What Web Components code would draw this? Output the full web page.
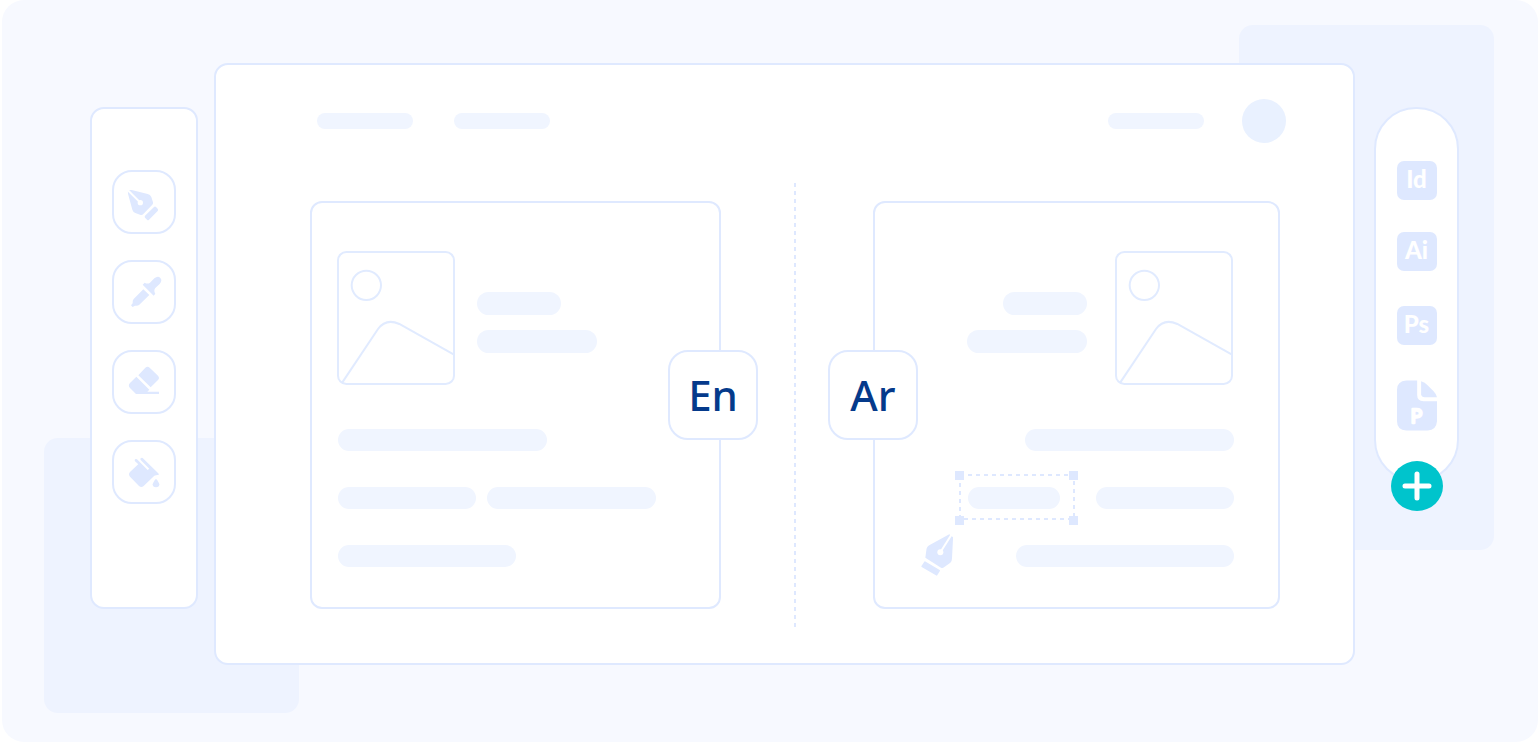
<!DOCTYPE html>
<html lang="en">
<head>
<meta charset="utf-8">
<title>Bilingual design editor</title>
<style>
  :root {
    --stage: #f7f9ff;
    --blob: #eef3ff;
    --line: #dfe9ff;
    --icon: #dee8ff;
    --bar: #f0f5ff;
    --navy: #053a8b;
    --teal: #00c4cc;
  }
  body { margin: 0; background: #fff; font-family: "Noto Sans", "Open Sans", sans-serif; }
</style>
</head>
<body>
<editor-stage>
  <tool-panel></tool-panel>
  <editor-window>
    <doc-page slot="source" lang-code="En"></doc-page>
    <doc-page slot="target" lang-code="Ar" mirrored></doc-page>
  </editor-window>
  <app-dock></app-dock>
</editor-stage>

<script>
const define = (name, html) => {
  const template = document.createElement('template');
  template.innerHTML = html;
  customElements.define(name, class extends HTMLElement {
    constructor() {
      super();
      this.attachShadow({ mode: 'open' }).append(template.content.cloneNode(true));
    }
  });
};

/* Rounded placeholder bar; size comes from --w and --h. */
define('place-bar', `
<style>
  :host { display: block; flex: none; position: relative; width: var(--w, 96px); height: var(--h, 22px);
    border-radius: 12px; background: var(--bar); }
</style><slot></slot>`);

define('photo-frame', `
<style>
  :host { display: block; flex: none; width: 118px; height: 134px; }
  svg { display: block; width: 100%; height: 100%; }
</style>
<svg viewBox="111 183 354 402" fill="none" stroke="#e1ebff" stroke-width="6" aria-hidden="true">
  <rect x="114" y="186" width="348" height="396" rx="25"/>
  <circle cx="199" cy="286" r="44"/>
  <path d="M127 577 L234 417 Q258 384 298 402 L462 494"/>
</svg>`);

define('selection-frame', `
<style>
  :host { display: block; position: absolute; left: -13px; top: -17px; width: 124px; height: 55px; }
  svg { display: block; width: 100%; height: 100%; }
</style>
<svg viewBox="0 0 124 55" aria-hidden="true">
  <rect x="5" y="5" width="114" height="44" fill="none" stroke="#dee8ff" stroke-width="2" stroke-dasharray="4 4"/>
  <path fill="#dee8ff" d="M0 1h9v9H0z M114 1h9v9h-9z M0 46h9v9H0z M114 46h9v9h-9z"/>
</svg>`);

define('lang-badge', `
<style>
  :host { display: flex; align-items: center; justify-content: center; box-sizing: border-box;
    width: 90px; height: 90px; border: 2px solid var(--line); border-radius: 20px; background: #fff;
    color: var(--navy); font-size: 42px; font-weight: 500; line-height: 56px; }
</style><slot></slot>`);

customElements.define('doc-page', class extends HTMLElement {
  connectedCallback() {
    if (this.shadowRoot) return;
    const mirrored = this.hasAttribute('mirrored');
    this.attachShadow({ mode: 'open' }).innerHTML = `
<style>
  :host { display: block; position: relative; box-sizing: border-box; min-width: 0; border: 2px solid var(--line);
    border-radius: 12px; padding: 48px 44px 40px 26px; }
  .row { display: flex; }
  .hero { align-items: center; gap: 22px; margin-bottom: 44px; }
  .hero photo-frame { margin-left: -1px; }
  .titles { display: flex; flex-direction: column; gap: 15px; padding-top: 8px; --h: 23px; }
  .lines { display: flex; flex-direction: column; gap: 36px; }
  .pair { gap: 11px; }
  lang-badge { position: absolute; top: 147px; right: -39px; }
  .cursor { display: none; }
  :host([mirrored]) .row { flex-direction: row-reverse; }
  :host([mirrored]) .hero { gap: 28px; }
  :host([mirrored]) .hero photo-frame { margin: 0 1px 0 0; }
  :host([mirrored]) .titles { align-items: flex-end; }
  :host([mirrored]) .pair { gap: 36px; }
  :host([mirrored]) lang-badge { right: auto; left: -47px; }
  :host([mirrored]) .cursor { display: block; position: absolute; left: 46px; top: 331px; width: 33px; height: 42px; }
</style>
<div class="row hero">
  <photo-frame></photo-frame>
  <div class="titles"><place-bar style="--w:84px"></place-bar><place-bar style="--w:120px"></place-bar></div>
</div>
<div class="lines">
  <div class="row"><place-bar style="--w:209px"></place-bar></div>
  <div class="row pair">
    <place-bar style="--w:138px"></place-bar>
    ${mirrored ? '<place-bar style="--w:92px"><selection-frame></selection-frame></place-bar>' : '<place-bar style="--w:169px"></place-bar>'}
  </div>
  <div class="row"><place-bar style="--w:${mirrored ? 218 : 178}px"></place-bar></div>
</div>
<svg class="cursor" viewBox="62 221 99 126" aria-hidden="true">
  <path fill="#dee8ff" d="M147 222 L88 254 Q78 260 78 270 L75 292 L122 322 Q127 325 131 321 L150 307 Q155 303 155 294 L158 236 Q159 228 156 229 Z"/>
  <path stroke="#fff" stroke-width="6" d="M156 219 L120 276"/>
  <circle cx="120" cy="276" r="9" fill="#fff"/>
  <path fill="#dee8ff" stroke="#dee8ff" stroke-width="4" stroke-linejoin="round" d="M74 305 L117 331 L109 344 L65 318 Z"/>
</svg>
<lang-badge>${this.getAttribute('lang-code')}</lang-badge>`;
  }
});

define('editor-window', `
<style>
  :host { display: block; flex: 1; min-width: 0; box-sizing: border-box; border: 2px solid var(--line);
    border-radius: 14px; background: #fff; padding: 34px 73px 35px 94px; }
  header { display: flex; align-items: center; gap: 41px; margin: 0 -6px 40px 7px; --h: 16px; }
  .end { display: flex; align-items: center; gap: 38px; margin-left: auto; }
  .avatar { width: 44px; height: 44px; border-radius: 50%; background: #e9f1ff; }
  main { display: grid; grid-template-columns: minmax(0, 411fr) 152px minmax(0, 407fr); align-items: start; }
  ::slotted(doc-page) { margin-top: 18px; }
  .divider { justify-self: center; align-self: stretch; width: 2px; min-height: 445px; margin-right: 4px;
    background: repeating-linear-gradient(#dee8ff 0 4px, transparent 4px 8px); }
</style>
<header>
  <place-bar></place-bar><place-bar></place-bar>
  <div class="end"><place-bar></place-bar><div class="avatar"></div></div>
</header>
<main>
  <slot name="source"></slot>
  <div class="divider"></div>
  <slot name="target"></slot>
</main>`);

define('tool-panel', `
<style>
  :host { display: flex; flex-direction: column; align-items: center; gap: 26px; flex: none; box-sizing: border-box;
    width: 108px; margin: 44px 16px 0 0; padding: 61px 0 103px; border: 2px solid var(--line); border-radius: 14px; background: #fff; }
  button { display: block; box-sizing: border-box; width: 64px; height: 64px; padding: 0; border: 2px solid var(--line);
    border-radius: 20px; background: #fff; }
  svg { display: block; width: 60px; height: 60px; fill: var(--icon); }
</style>
<button aria-label="Pen"><svg viewBox="102 231 180 180">
  <path d="M155 285 L203 297 Q211 299 214 306 L219 322 Q220 326 217 329 L190 357 Q186 362 180 359 L166 354 Q159 351 157 344 L144 296 Q142 287 147 285 Z"/>
  <path stroke="#fff" stroke-width="6" d="M143 285 L181 323"/><circle cx="181" cy="323" r="8" fill="#fff"/>
  <path d="M222 336 Q225 333 228 336 L233 341 Q236 345 233 348 L207 374 Q204 377 201 374 L195 368 Q193 365 195 362 Z"/>
</svg></button>
<button aria-label="Eyedropper"><svg viewBox="102 501 180 180">
  <path d="M223 550 Q234 541 241 549 Q248 557 239 567 L226 579 Q220 587 226 596 L221 602 L188 569 L194 563 Q203 568 210 563 Z"/>
  <path d="M190 583 L208 600 L178 629 Q174 633 165 632 L158 636 L153 631 L158 625 Q157 616 161 612 Z"/>
</svg></button>
<button aria-label="Eraser"><svg viewBox="102 51 180 180">
  <path d="M175 121 L196 98 Q203 92 209 98 L234 122 Q240 129 234 135 L212 157 Z"/>
  <path d="M169 125 L208 164 L202 170 H237 V177 H168 L150 159 Q143 152 150 144 Z"/>
</svg></button>
<button aria-label="Paint bucket"><svg viewBox="102 321 180 180">
  <path d="M173 389 L150 411 Q144 418 150 425 L177 453 Q184 459 191 453 L223 422 Q230 419 236 420 Q237 416 234 414 L188 369 Q185 367 182 370 Q180 372 182 375 L208 401 L203 405 L171 373 Q168 371 165 373 Q163 376 165 379 L175 388 Z"/>
  <path d="M228 431 Q218 443 218 448 A10 9 0 0 0 238 448 Q238 443 228 431 Z"/>
</svg></button>`);

define('app-dock', `
<style>
  :host { display: flex; flex-direction: column; align-items: center; flex: none; position: relative; box-sizing: border-box;
    width: 85px; margin: 44px 79px 0 19px; padding: 52px 0 49px; border: 2px solid var(--line); border-radius: 42px; background: #fff; }
  button { display: block; border: 0; padding: 0; font: inherit; }
  .app { width: 40px; height: 39px; margin-bottom: 35px; padding-bottom: 4px; border-radius: 7px; background: var(--icon); color: #fff;
    font-family: Lato, "Noto Sans", sans-serif; font-size: 24px; font-weight: 900; line-height: 35px; text-align: center; }
  .app:first-of-type { margin-bottom: 32px; }
  .file { width: 40px; height: 51px; background: none; }
  .file svg { display: block; width: 100%; height: 100%; }
  .file text { font-size: 60px; font-weight: 400; }
  .add { position: absolute; bottom: -31px; width: 52px; height: 50px; border-radius: 50%; background: var(--teal); }
  .add svg { display: block; margin: 0 auto; width: 30px; height: 30px; }
</style>
<button class="app">Id</button>
<button class="app">Ai</button>
<button class="app">Ps</button>
<button class="file"><svg viewBox="110 75 121 152">
  <g fill="#dee8ff"><path d="M171 75 H138 Q110 77 110 103 V199 Q110 225 138 227 H203 Q229 226 231 199 V138 H190 Q171 137 171 119 Z"/>
  <path d="M183 78 Q194 81 204 91 L220 107 Q229 116 231 126 H194 Q184 126 183 117 Z"/></g>
  <text x="151" y="204" fill="#fff" stroke="#fff" stroke-width="7" stroke-linejoin="round">P</text>
</svg></button>
<button class="add" aria-label="Add"><svg viewBox="0 0 30 30" stroke="#fff" stroke-width="5" stroke-linecap="round"><path d="M3 15H27M15 3V27"/></svg></button>`);

define('editor-stage', `
<style>
  :host { display: flex; align-items: flex-start; position: relative; isolation: isolate; box-sizing: border-box;
    min-height: 100vh; margin-left: 2px; padding: 63px 0 77px 88px; border-radius: 22px; background: var(--stage); }
  .blob { position: absolute; z-index: -1; width: 255px; border-radius: 14px; background: var(--blob); }
  .top { right: 44px; top: 25px; height: 525px; }
  .bottom { left: 42px; bottom: 29px; height: 275px; }
</style>
<div class="blob top"></div><div class="blob bottom"></div>
<slot></slot>`);
</script>
</body>
</html>
